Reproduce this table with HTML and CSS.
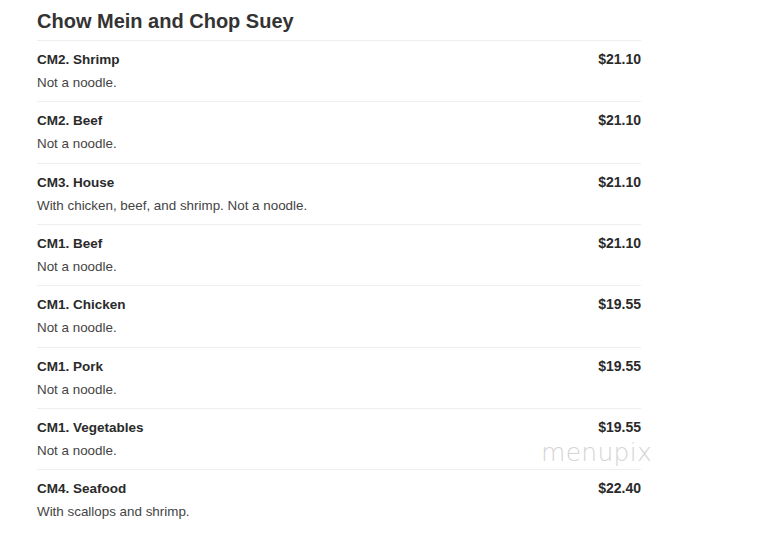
FILE: index.html
```html
<!DOCTYPE html>
<html lang="en">
<head>
<meta charset="utf-8">
<title>Chow Mein and Chop Suey</title>
<link rel="stylesheet" href="styles.css">
</head>
<body>
<main class="menu">
  <h2 class="section-title">Chow Mein and Chop Suey</h2>
  <ul class="items">
    <li class="item"><div class="item-head"><span class="name">CM2. Shrimp</span><span class="price">$21.10</span></div><p class="desc">Not a noodle.</p></li>
    <li class="item"><div class="item-head"><span class="name">CM2. Beef</span><span class="price">$21.10</span></div><p class="desc">Not a noodle.</p></li>
    <li class="item"><div class="item-head"><span class="name">CM3. House</span><span class="price">$21.10</span></div><p class="desc">With chicken, beef, and shrimp. Not a noodle.</p></li>
    <li class="item"><div class="item-head"><span class="name">CM1. Beef</span><span class="price">$21.10</span></div><p class="desc">Not a noodle.</p></li>
    <li class="item"><div class="item-head"><span class="name">CM1. Chicken</span><span class="price">$19.55</span></div><p class="desc">Not a noodle.</p></li>
    <li class="item"><div class="item-head"><span class="name">CM1. Pork</span><span class="price">$19.55</span></div><p class="desc">Not a noodle.</p></li>
    <li class="item"><div class="item-head"><span class="name">CM1. Vegetables</span><span class="price">$19.55</span></div><p class="desc">Not a noodle.</p></li>
    <li class="item"><div class="item-head"><span class="name">CM4. Seafood</span><span class="price">$22.40</span></div><p class="desc">With scallops and shrimp.</p></li>
  </ul>
</main>
<div class="watermark">menupix</div>
</body>
</html>
```

FILE: styles.css
```css
html, body {
  margin: 0;
  padding: 0;
  background: #fff;
}
body {
  font-family: "Liberation Sans", Arial, sans-serif;
  color: #333;
  position: relative;
  width: 774px;
  height: 537px;
  overflow: hidden;
}
.menu {
  width: 604px;
  padding-left: 37px;
  padding-top: 9px;
}
.section-title {
  margin: 0 0 7px 0;
  font-size: 20px;
  line-height: 24px;
  font-weight: bold;
  color: #333;
}
.items {
  list-style: none;
  margin: 0;
  padding: 0;
}
.item {
  border-top: 1px solid #eee;
  padding: 10px 0 10.33px 0;
  display: flex;
  flex-direction: column;
  gap: 6px;
}
.item-head {
  display: flex;
  justify-content: space-between;
  align-items: center;
  font-size: 13.5px;
  line-height: 17px;
  font-weight: bold;
  color: #2a2a2a;
}
.price {
  font-size: 14px;
}
.desc {
  margin: 0;
  font-size: 13.4px;
  line-height: 17px;
  color: #444;
}
.watermark {
  position: absolute;
  left: 541px;
  top: 438px;
  font-family: "DejaVu Sans", sans-serif;
  font-weight: 200;
  font-size: 25px;
  letter-spacing: 0.3px;
  color: #d4d4d4;
}
```
